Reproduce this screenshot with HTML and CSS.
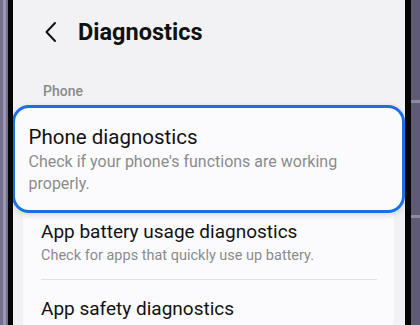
FILE: index.html
```html
<!DOCTYPE html>
<html>
<head>
<meta charset="utf-8">
<link rel="stylesheet" href="styles.css">
</head>
<body>
<div class="device">
  <div class="frame frame-left"><span class="shine"></span></div>
  <div class="bezel bezel-left"></div>
  <div class="screen">
    <div class="topbar">
      <svg class="back" width="14" height="22" viewBox="0 0 14 22"><path d="M11 2 L2.5 11 L11 20" fill="none" stroke="#111" stroke-width="2" stroke-linecap="round" stroke-linejoin="round"/></svg>
      <h1 class="title">Diagnostics</h1>
    </div>
    <div class="section">Phone</div>
    <div class="list">
      <div class="item item-focus">
        <div class="item-title">Phone diagnostics</div>
        <div class="item-sub">Check if your phone's functions are working properly.</div>
      </div>
      <div class="item">
        <div class="item-title">App battery usage diagnostics</div>
        <div class="item-sub">Check for apps that quickly use up battery.</div>
      </div>
      <div class="divider"></div>
      <div class="item">
        <div class="item-title">App safety diagnostics</div>
      </div>
    </div>
  </div>
  <div class="bezel bezel-right"></div>
  <div class="frame frame-right"><span class="seam seam-1"></span><span class="seam seam-2"></span></div>
</div>
</body>
</html>
```
FILE: styles.css
```css
html, body {
  margin: 0;
  padding: 0;
  width: 420px;
  height: 325px;
  overflow: hidden;
  background: #6e6a86;
}
.device {
  display: flex;
  width: 420px;
  height: 325px;
  font-family: Roboto, "Noto Sans", sans-serif;
}
.frame {
  background: #74708e;
  display: flex;
  flex-direction: column;
}
.frame-left {
  width: 8px;
  flex-direction: row;
}
.shine {
  width: 3px;
  margin-left: 3px;
  background: #9a97b1;
}
.frame-right {
  width: 9px;
  background: #5f5b76;
}
.seam {
  height: 3px;
  background: #8d8aa3;
}
.seam-1 { margin-top: 100px; }
.seam-2 { margin-top: 112px; }
.bezel {
  background: #050505;
}
.bezel-left { width: 5px; }
.bezel-right { width: 6px; }
.screen {
  flex: 1;
  background: #f2f2f4;
  min-width: 0;
  height: 325px;
  overflow: hidden;
}
.topbar {
  display: flex;
  align-items: center;
  height: 64px;
  padding-left: 31px;
}
.back {
  display: block;
}
.title {
  margin: 0 0 0 20px;
  font-size: 23.5px;
  font-weight: 700;
  color: #111;
  letter-spacing: 0;
}
.section {
  padding-left: 30px;
  margin-top: 18px;
  font-size: 14px;
  line-height: 18px;
  font-weight: 500;
  color: #8a8a8c;
  height: 20px;
}
.list {
  margin: 7px 11px 0 10px;
  background: #fbfbfd;
  border-radius: 22px;
  padding-bottom: 20px;
}
.item {
  padding: 0 18px;
}
.item-title {
  font-size: 19px;
  color: #111;
  line-height: 26px;
}
.item-sub {
  font-size: 14.5px;
  color: #8b8b8d;
  line-height: 22px;
}
.item-focus {
  margin: -4px -11px 6px -11px;
  background: #fbfbfd;
  border: 3.5px solid #1b6fe3;
  border-radius: 17px;
  padding: 15px 20px 15px 13.5px;
  box-shadow: 0 2px 6px rgba(0,0,0,0.15);
}
.item-focus .item-title {
  font-size: 20.5px;
  line-height: 28px;
}
.item-focus .item-sub {
  font-size: 16px;
  line-height: 22px;
}
.divider {
  height: 1px;
  background: #e2e2e4;
  margin: 12px 17px 16px 18px;
}
```
